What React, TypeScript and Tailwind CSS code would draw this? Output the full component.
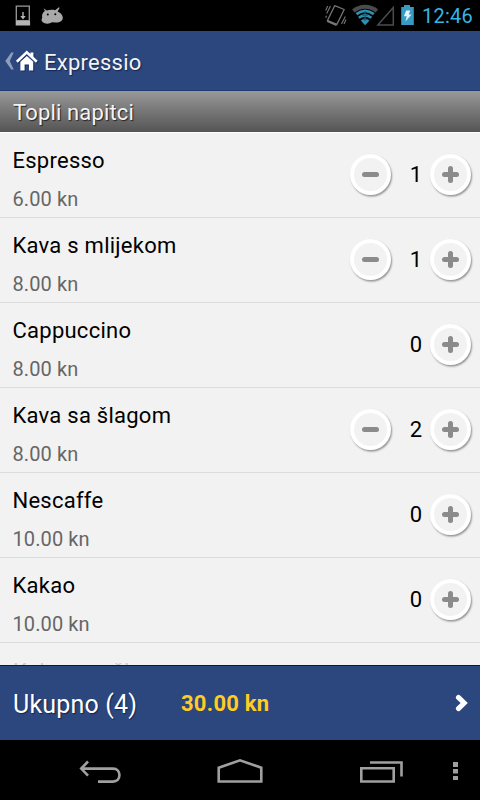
interface Drink {
  name: string;
  price: string;
  count: number;
}

const drinks: Drink[] = [
  { name: 'Espresso', price: '6.00 kn', count: 1 },
  { name: 'Kava s mlijekom', price: '8.00 kn', count: 1 },
  { name: 'Cappuccino', price: '8.00 kn', count: 0 },
  { name: 'Kava sa šlagom', price: '8.00 kn', count: 2 },
  { name: 'Nescaffe', price: '10.00 kn', count: 0 },
  { name: 'Kakao', price: '10.00 kn', count: 0 },
];

function StatusBar() {
  return (
    <div className="flex h-[31px] shrink-0 items-center bg-black pl-[15px] pr-[6px]">
      <svg width="50" height="31" viewBox="0 0 50 31">
        <path d="M1.3 6.2h13v14.5h-13z" fill="none" stroke="#9a9a9a" strokeWidth="1.3" />
        <path d="M.7 21h14.4v4.5H.7z" fill="#b4b4b4" />
        <path d="M8 12v5" stroke="#b4b4b4" strokeWidth="1.4" />
        <path d="M5.3 16h5.4L8 19.6z" fill="#b4b4b4" />
        {/* Android head */}
        <path
          d="M28.6 8.2l3 2.4c3-1 6-1 8.5-.4l3.8-2.9.7.6-2 3.6c3.4 1.8 5.2 3.6 5.2 6.2 0 3-2.5 4.6-6.7 4.8l-4.2-.2c-1.5 1.3-5 2-7.8.8-2.6-1.2-3.2-3.7-1.9-5.4-.6-2.8.4-5.2 2.7-6.8z"
          fill="#a9a9a9"
        />
        <circle cx="32.8" cy="14.4" r="1" fill="#000" />
        <circle cx="40.3" cy="14.2" r="1" fill="#000" />
      </svg>
      <svg className="ml-auto" width="92" height="31" viewBox="0 0 92 31" fill="none">
        {/* Vibrate */}
        <g stroke="#767676" strokeWidth="1.3">
          <path d="M12.7 5.7 22.2 9.5 14.7 24.7 5.3 20.8z" strokeLinejoin="round" />
          <path d="M5.5 21 14.6 24.9" strokeWidth="2.4" />
          <path d="M8.5 6 4.7 13.5M5.7 6 3.7 10.5M4.6 15.7l-1 2M19.5 24l3.8-7.4M22 24l2-4.5" strokeWidth="1.1" />
        </g>
        {/* Wifi */}
        <path d="M31.3 11c7.2-5.6 16.4-5.6 23.6 0" stroke="#4b4b4b" strokeWidth="4" />
        <path d="M34.4 14.2c5.6-4.2 11.8-4.2 17.4 0" stroke="#2b91b6" strokeWidth="2.8" />
        <path d="M36.8 17.8c4.2-3.2 8.4-3.2 12.6 0" stroke="#2b91b6" strokeWidth="2.6" />
        <path d="M38.7 20.6c3-2.2 5.8-2.2 8.8 0l-4.4 4.6z" fill="#2b91b6" />
        <path d="M43 11v10M40.4 15.4h5.2M40.4 19.4h5.2" stroke="#20627a" strokeWidth="1.2" />
        {/* Signal */}
        <path d="M55.8 25 71.3 7.5V25z" stroke="#4c4c4c" strokeWidth="1.5" />
        {/* Battery */}
        <path d="M79.2 7h2.8V5h6v2h3.8v18H79.2z" fill="#389cc2" />
        <path d="M84.2 10.5h4l-1.5 4h2.8l-6 7 1.2-5.2h-2.8z" fill="#e4f4fa" />
      </svg>
      <span className="ml-[8px] w-[52px] whitespace-nowrap pt-px text-[20px] leading-[32px] tracking-[0.25px] text-[#33b5e5]">
        12:46
      </span>
    </div>
  );
}

function Header() {
  return (
    <header className="flex h-[60px] shrink-0 items-center border-b border-[#1f3a70] bg-[#2c467e] pl-[5px]">
      <svg width="34" height="59" viewBox="0 0 34 59">
        <path d="M6.3 21.5h2.4L4.8 30l3.9 8.5H6.3L.3 30z" fill="#8e9dbb" />
        <g className="drop-shadow-[1px_1px_0_#172c59]">
          <path d="M11.8 30.8 21.8 21.4 31.8 30.8" fill="none" stroke="#fff" strokeWidth="2.6" />
          <path d="M25.4 21.5h3v5l-3-2.4z" fill="#fff" />
          <path d="m15.4 30.8 6.4-5.7 6.4 5.7v8.7h-4.2v-6.1h-4.4v6.1h-4.2z" fill="#fff" />
        </g>
      </svg>
      <h1 className="ml-[5px] pt-[3px] text-[22px] tracking-[0.25px] text-[#f3f3f3] [text-shadow:1px_1px_1px_#122650]">
        Expressio
      </h1>
    </header>
  );
}

function RoundButton({ plus }: { plus?: boolean }) {
  return (
    <button className="flex size-[41px] items-center justify-center rounded-full border-4 border-white bg-[#f2f2f2] shadow-[1px_1.5px_2px_rgba(0,0,0,0.4)]">
      <svg width="17" height="17" viewBox="0 0 17 17" className="shrink-0" stroke="#8b8b8b" strokeWidth="5" strokeLinecap="round">
        <path d="M2.5 8.5h12" />
        {plus && <path d="M8.5 2.5v12" />}
      </svg>
    </button>
  );
}

function DrinkRow({ name, price, count }: Drink) {
  return (
    <li className="flex h-[85px] items-start justify-between border-b border-[#dcdcdc] pl-[12.5px] pr-[9px]">
      <div className="pt-[9px]">
        <div className="text-[22px] leading-[38px] tracking-[0.25px] text-black">{name}</div>
        <div className="text-[20px] leading-[38px] tracking-[0.1px] text-[#666]">{price}</div>
      </div>
      <div className="flex items-start pt-[20.5px]">
        {count > 0 && <RoundButton />}
        <span className="w-[39px] pr-[8px] text-right text-[22px] leading-[42px] text-black">{count}</span>
        <RoundButton plus />
      </div>
    </li>
  );
}

function NavBar() {
  return (
    <nav className="h-[60px] shrink-0 bg-black">
      <svg width="480" height="60" viewBox="0 0 480 60" fill="none" stroke="#a0a0a0" strokeWidth="2.6">
        <path d="M81 28.6h32c8.6 0 8.6 13 0 13H98M88 21.5l-6.8 7.1 6.8 7.1" />
        <path d="M218.7 27.7 240 20.3l21.3 7.4v13.8h-42.6z" />
        <path d="M361.3 28.3h32.4v13.2h-32.4zM370 22.5h31.5v14" />
        <path d="M455.5 22v5M455.5 29v4.6M455.5 36v4" strokeWidth="5" />
      </svg>
    </nav>
  );
}

export default function App() {
  return (
    <div className="flex h-[800px] w-[480px] flex-col overflow-hidden bg-[#f2f2f2] font-['Roboto','Noto_Sans',sans-serif]">
      <StatusBar />
      <Header />
      <h2 className="h-[41px] shrink-0 bg-linear-to-b from-[#999] to-[#555] pl-[13px] text-[22px] leading-[43px] tracking-[0.15px] text-[#f3f3f3] [text-shadow:1px_1px_1px_#222]">
        Topli napitci
      </h2>
      <main className="h-[533px] overflow-hidden border-t border-white">
        <ul>
          {drinks.map((drink) => (
            <DrinkRow key={drink.name} {...drink} />
          ))}
        </ul>
        {/* Next row, fading out under the total bar */}
        <div className="pl-[13px] pt-[10px] text-[22px] leading-[38px] tracking-[0.4px] text-[#ccc]">Kakao sa šlagom</div>
      </main>
      <footer className="flex h-[75px] shrink-0 items-center border-t border-[#07135a] bg-[#2c467e] pl-[13px] pr-[11px]">
        <span className="w-[168px] pt-[3px] text-[25px] tracking-[0.2px] text-white [text-shadow:1px_1px_1px_#122650]">
          Ukupno (4)
        </span>
        <span className="pt-px text-[22px] font-bold tracking-[0.25px] text-[#fc2]">30.00 kn</span>
        <svg className="ml-auto" width="14" height="18" viewBox="0 0 14 18">
          <path d="M3.4 3.4 9.2 9l-5.8 5.6" fill="none" stroke="#fff" strokeWidth="5" strokeLinecap="round" strokeLinejoin="miter" />
        </svg>
      </footer>
      <NavBar />
    </div>
  );
}
